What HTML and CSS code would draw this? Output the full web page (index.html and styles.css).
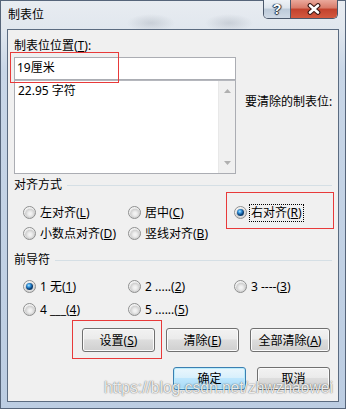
FILE: index.html
```html
<!DOCTYPE html>
<html lang="zh-CN">
<head>
    <meta charset="UTF-8">
    <title>制表位</title>
    <link rel="stylesheet" href="styles.css">
</head>
<body>
    <div class="window">
        <div class="titlebar">
            <span class="title">制表位</span>
            <div class="caption-buttons">
                <div class="cap-btn cap-help">?</div>
                <div class="cap-btn cap-close">
                    <svg width="16" height="12" viewBox="0 0 16 12">
                        <path d="M4 2.5 L12 9.5 M12 2.5 L4 9.5" stroke="#3d1a16" stroke-width="4.8" stroke-linecap="round"/>
                        <path d="M4 2.5 L12 9.5 M12 2.5 L4 9.5" stroke="#fff" stroke-width="2.6" stroke-linecap="round"/>
                    </svg>
                </div>
            </div>
        </div>

        <div class="client">
            <div class="field-label">制表位位置(<u>T</u>):</div>
            <div class="tab-row">
                <div class="tab-col">
                    <div class="tab-input">19厘米</div>
                    <div class="tab-list">
                        <div class="list-items">
                            <div class="list-item">22.95 字符</div>
                        </div>
                        <div class="scrollbar">
                            <svg width="7" height="4" viewBox="0 0 7 4"><path d="M0 4 L3.5 0 L7 4Z" fill="#b0b0b0"/></svg>
                            <svg width="7" height="4" viewBox="0 0 7 4"><path d="M0 0 L3.5 4 L7 0Z" fill="#b0b0b0"/></svg>
                        </div>
                    </div>
                </div>
                <div class="clear-label">要清除的制表位:</div>
            </div>

            <div class="group-header"><span>对齐方式</span><div class="group-line"></div></div>
            <div class="options align-options">
                <div class="option"><span class="radio"></span><span class="option-text">左对齐(<u>L</u>)</span></div>
                <div class="option"><span class="radio"></span><span class="option-text">居中(<u>C</u>)</span></div>
                <div class="option"><span class="radio checked"></span><span class="option-text focused">右对齐(<u>R</u>)</span></div>
                <div class="option"><span class="radio"></span><span class="option-text">小数点对齐(<u>D</u>)</span></div>
                <div class="option"><span class="radio"></span><span class="option-text">竖线对齐(<u>B</u>)</span></div>
            </div>

            <div class="group-header leader-header"><span>前导符</span><div class="group-line"></div></div>
            <div class="options leader-options">
                <div class="option"><span class="radio checked"></span><span class="option-text">1 无(<u>1</u>)</span></div>
                <div class="option"><span class="radio"></span><span class="option-text">2 .....(<u>2</u>)</span></div>
                <div class="option"><span class="radio"></span><span class="option-text">3 ----(<u>3</u>)</span></div>
                <div class="option"><span class="radio"></span><span class="option-text">4 ___(<u>4</u>)</span></div>
                <div class="option"><span class="radio"></span><span class="option-text">5 ......(<u>5</u>)</span></div>
            </div>

            <div class="button-row">
                <button class="btn">设置(<u>S</u>)</button>
                <button class="btn">清除(<u>E</u>)</button>
                <button class="btn btn-wide">全部清除(<u>A</u>)</button>
            </div>
            <div class="button-row bottom-row">
                <button class="btn btn-default">确定</button>
                <button class="btn">取消</button>
            </div>

            <div class="mark mark-position"></div>
            <div class="mark mark-right"></div>
            <div class="mark mark-set"></div>
            <div class="watermark">https://blog.csdn.net/zhwzhaowei</div>
        </div>
    </div>
</body>
</html>
```

FILE: styles.css
```css
/* Reset */
* {
    box-sizing: border-box;
}

body {
    margin: 0;
    width: 346px;
    height: 409px;
    overflow: hidden;
    background: #c3d2e4;
    font-family: "Noto Sans", "Noto Sans CJK SC", sans-serif;
    font-size: 12px;
    line-height: 16px;
    color: #000;
}

u {
    text-decoration: underline;
    text-underline-offset: 1px;
}

/* Window frame (Aero) */
.window {
    width: 346px;
    height: 409px;
    border: 1px solid #56657a;
    padding: 0 6px 6px;
    display: flex;
    flex-direction: column;
    background:
        radial-gradient(ellipse 24px 9px at 150px 22px, rgba(110, 120, 135, 0.22), transparent),
        radial-gradient(ellipse 24px 9px at 228px 22px, rgba(110, 120, 135, 0.22), transparent),
        linear-gradient(to bottom, #e8ecf1 0, #e1e7ee 28px, #c8d6e7 70px, #bccde2 100%);
}

.titlebar {
    height: 28px;
    flex: none;
    display: flex;
    align-items: flex-start;
    padding-left: 1px;
}

.title {
    margin-top: 6px;
}

.caption-buttons {
    margin-left: auto;
    margin-right: 1px;
    margin-top: -1px;
    display: flex;
    border: 1px solid #4b586b;
    border-top: none;
    border-radius: 0 0 5px 5px;
    overflow: hidden;
}

.cap-btn {
    height: 18px;
    display: flex;
    align-items: center;
    justify-content: center;
}

.cap-help {
    width: 27px;
    border-right: 1px solid #4b586b;
    background: linear-gradient(#eef2f7 0%, #dde4ec 45%, #bccad9 50%, #cfd9e5 100%);
    font-family: "Liberation Sans", sans-serif;
    font-weight: bold;
    font-size: 14px;
    color: #fff;
    text-shadow: 0 0 1px #263140, 1px 0 1px #263140, -1px 0 1px #263140, 0 1px 1px #263140;
}

.cap-close {
    width: 46px;
    background: linear-gradient(#eaa99c 0%, #d87a68 45%, #c2422d 50%, #d3593f 100%);
}

/* Client area */
.client {
    position: relative;
    flex: 1;
    border: 1px solid #5b6b80;
    background: #f0f0f0;
    padding: 8px 6px 0;
}

.tab-row {
    display: flex;
    align-items: flex-start;
    margin-top: 3px;
}

.tab-col {
    width: 222px;
    flex: none;
}

.tab-input {
    height: 23px;
    border: 1px solid #abadb3;
    background: #fff;
    padding-left: 2px;
    line-height: 19px;
}

.tab-list {
    height: 94px;
    border: 1px solid #abadb3;
    border-top-color: #b5b7bd;
    background: #fff;
    display: flex;
}

.list-items {
    flex: 1;
    padding: 2px 0 0 3px;
}

.scrollbar {
    width: 17px;
    background: #f0f0f0;
    border-left: 1px solid #e8e8e8;
    display: flex;
    flex-direction: column;
    justify-content: space-between;
    align-items: center;
    padding: 8px 0 8px;
}

.clear-label {
    margin-left: 9px;
    margin-top: 37px;
    white-space: nowrap;
}

/* Group headers */
.group-header {
    display: flex;
    align-items: center;
    margin-top: 3px;
}

.leader-header {
    margin-top: 8px;
}

.group-line {
    flex: 1;
    margin-left: 5px;
    height: 1px;
    background: #d5dfe5;
}

/* Radio options */
.options {
    display: grid;
    grid-template-columns: 105px 106px 1fr;
    padding-left: 9px;
}

.align-options {
    grid-auto-rows: 21px;
    margin-top: 9px;
}

.leader-options {
    grid-auto-rows: 23px;
    margin-top: 7px;
}

.option {
    display: flex;
    align-items: center;
    gap: 2px;
    white-space: nowrap;
}

.option-text {
    border: 1px dotted transparent;
    padding: 0 1px;
}

.option-text.focused {
    border-color: #000;
}

.radio {
    position: relative;
    flex: none;
    width: 13px;
    height: 13px;
    border-radius: 50%;
    border: 1px solid #8e8f8f;
    background: radial-gradient(circle at 55% 60%, #f6f6f6 0, #ececec 2px, #cfcfcf 4.5px, #e4e4e4 5px, #f4f4f4 6px);
}

.radio.checked::after {
    content: "";
    position: absolute;
    left: 2px;
    top: 2px;
    width: 7px;
    height: 7px;
    border-radius: 50%;
    background: radial-gradient(circle at 40% 35%, #b4e8ff 0, #3b9ae0 1.6px, #125a9c 3px, #0b3d6e 3.6px);
}

/* Buttons */
.button-row {
    display: flex;
    justify-content: flex-end;
    gap: 11px;
    padding-right: 2px;
    margin-top: 7px;
}

.bottom-row {
    margin-top: 15px;
}

.btn {
    width: 73px;
    height: 24px;
    padding: 1px 0 0;
    border: 1px solid #707070;
    border-radius: 3px;
    background: linear-gradient(#f2f2f2 0%, #ebebeb 45%, #dddddd 50%, #cfcfcf 100%);
    box-shadow: inset 0 0 0 1px #fbfbfb;
    font: inherit;
    line-height: 16px;
    color: #000;
}

.bottom-row .btn {
    height: 23px;
}

.btn-wide {
    width: 80px;
}

.btn-default {
    border-color: #3c7fb1;
    background: linear-gradient(#eaf6fd 0%, #d9f0fc 45%, #bee6fd 50%, #a7d9f5 100%);
    box-shadow: inset 0 0 0 1px #b9ecfc;
}

/* Annotations on the screenshot */
.mark {
    position: absolute;
    border: 1px solid #e83a3a;
}

.mark-position {
    left: 2px;
    top: 22px;
    width: 109px;
    height: 31px;
}

.mark-right {
    left: 218px;
    top: 162px;
    width: 108px;
    height: 37px;
}

.mark-set {
    left: 64px;
    top: 290px;
    width: 90px;
    height: 39px;
}

.watermark {
    position: absolute;
    left: 96px;
    top: 349px;
    font-family: "Liberation Sans", sans-serif;
    font-size: 15.6px;
    line-height: 18px;
    color: rgba(255, 255, 255, 0.9);
    text-shadow: 0 0 1px rgba(0, 0, 0, 0.6), 0 0 2px rgba(0, 0, 0, 0.25);
    white-space: nowrap;
}
```
